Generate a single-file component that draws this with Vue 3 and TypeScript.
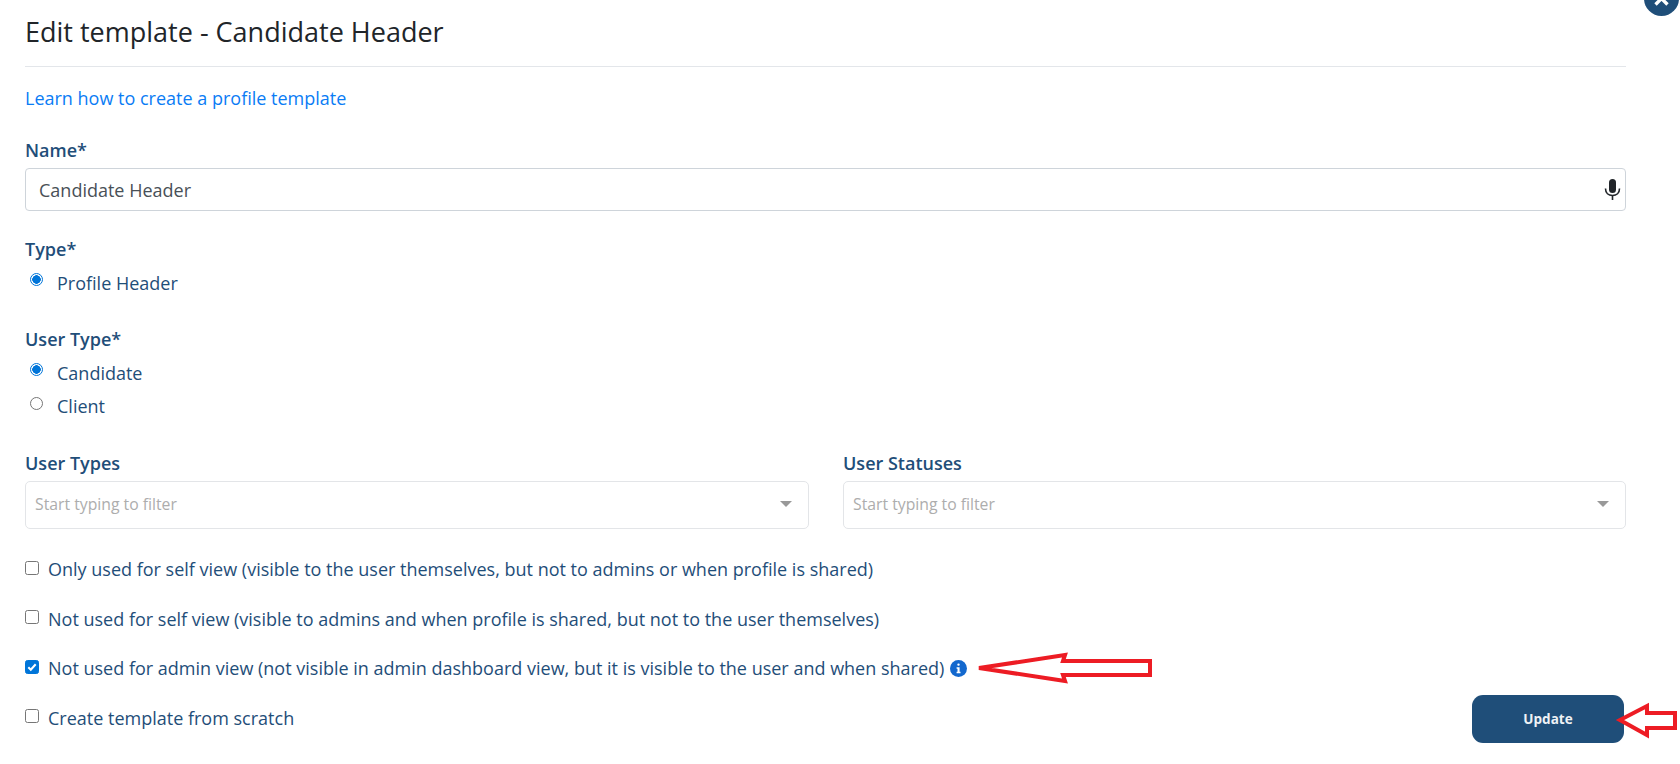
<script setup lang="ts">
const checks = [
  { text: 'Only used for self view (visible to the user themselves, but not to admins or when profile is shared)', on: false },
  { text: 'Not used for self view (visible to admins and when profile is shared, but not to the user themselves)', on: false },
]
</script>

<template>
  <div class="page">
    <button class="close" aria-label="Close">
      <svg width="35" height="35" viewBox="0 0 35 35"><circle cx="17.5" cy="17.5" r="17.5" fill="#1f4e79" /><path d="M11.5 11.5 L23.5 23.5 M23.5 11.5 L11.5 23.5" stroke="#fff" stroke-width="3.4" fill="none" /></svg>
    </button>
    <header class="head"><h1>Edit template - Candidate Header</h1></header>
    <a class="learn" href="#">Learn how to create a profile template</a>

    <label class="lab name-lab">Name*</label>
    <div class="input">
      <span>Candidate Header</span>
      <svg class="mic" width="17" height="24" viewBox="0 0 17 24">
        <rect x="5" y="1" width="7" height="14" rx="3.5" fill="#212529" />
        <path d="M1.5 10.5 C1.5 15 4.5 17.5 8.5 17.5 C12.5 17.5 15.500 15 15.500 10.500" stroke="#212529" stroke-width="1.600" fill="none" />
        <rect x="7.700" y="17" width="1.600" height="5" fill="#212529" />
      </svg>
    </div>

    <label class="lab type-lab">Type*</label>
    <div class="opt first"><span class="radio on"></span>Profile Header</div>

    <label class="lab usertype-lab">User Type*</label>
    <div class="opt first"><span class="radio on"></span>Candidate</div>
    <div class="opt second"><span class="radio"></span>Client</div>

    <div class="cols">
      <div class="col">
        <label class="lab">User Types</label>
        <div class="select"><span>Start typing to filter</span><i class="caret"></i></div>
      </div>
      <div class="col">
        <label class="lab">User Statuses</label>
        <div class="select"><span>Start typing to filter</span><i class="caret"></i></div>
      </div>
    </div>

    <div class="checks">
      <div v-for="c in checks" :key="c.text" class="check"><span class="box"></span>{{ c.text }}</div>
      <div class="check">
        <span class="box on">
          <svg width="14" height="14" viewBox="0 0 13 13"><path d="M2.500 6.800 L5.200 9.500 L10.500 3.500" stroke="#fff" stroke-width="2.200" fill="none" /></svg>
        </span>Not used for admin view (not visible in admin dashboard view, but it is visible to the user and when shared)<svg class="info" width="17" height="17" viewBox="0 0 17 17">
          <circle cx="8.500" cy="8.500" r="8.500" fill="#1368ce" />
          <rect x="7.300" y="3.400" width="2.400" height="2.400" rx="1.100" fill="#fff" />
          <path d="M6.600 7.200 H9.600 V11.800 H10.500 V13.300 H6.600 V11.800 H7.500 V8.700 H6.600 Z" fill="#fff" />
        </svg>
        <svg class="arrow arrow-a" width="176" height="32" viewBox="0 0 176 32">
          <path d="M3 16 L89 3 L87 9 L174 9 L174 23 L87 23 L89 29 Z" fill="#fff" stroke="#ed1c24" stroke-width="4" />
        </svg>
      </div>
      <div class="check last">
        <span class="box"></span>Create template from scratch
        <button class="update">Update</button>
        <svg class="arrow arrow-b" width="60" height="36" viewBox="0 0 60 36">
          <path d="M2 17 L29 3 L29 10 L57 10 L57 25 L29 25 L29 32 Z" fill="#fff" stroke="#ed1c24" stroke-width="4" />
        </svg>
      </div>
    </div>
  </div>
</template>

<style>
html, body { margin: 0; background: #fff; overflow: hidden; }
</style>

<style scoped>
.page {
  position: relative;
  box-sizing: border-box;
  width: 1680px;
  height: 764px;
  padding: 0 54px 0 25px;
  overflow: hidden;
  font-family: "Open Sans", sans-serif;
  font-size: 18px;
  color: #1f4e79;
}
.close {
  position: absolute;
  left: 1644px;
  top: -19px;
  padding: 0;
  border: 0;
  background: none;
  line-height: 0;
}
.head { height: 66px; border-bottom: 1px solid #e3e6ea; }
h1 {
  margin: 0;
  padding-top: 14px;
  font-size: 27px;
  line-height: 36px;
  font-weight: 400;
  color: #212529;
}
.learn {
  display: block;
  margin-top: 19px;
  font-size: 18px;
  line-height: 24px;
  color: #0a7cf5;
  text-decoration: none;
}
.lab {
  display: block;
  font-size: 18px;
  line-height: 24px;
  font-weight: 600;
  color: #1f4e79;
}
.name-lab { margin-top: 28px; }
.input {
  box-sizing: border-box;
  display: flex;
  align-items: center;
  justify-content: space-between;
  height: 43px;
  margin-top: 6px;
  padding: 0 4px 0 13px;
  border: 1px solid #ced4da;
  border-radius: 4px;
  font-size: 18px;
  color: #495057;
}
.type-lab { margin-top: 26px; }
.usertype-lab { margin-top: 32px; }
.opt {
  display: flex;
  align-items: center;
  height: 24px;
  padding-left: 5px;
  font-size: 18px;
  color: #1f4e79;
}
.first { margin-top: 10px; }
.second { margin-top: 9px; }
.radio {
  box-sizing: border-box;
  flex: none;
  width: 13px;
  height: 13px;
  margin: -6px 14px 0 0;
  border: 1px solid #767676;
  border-radius: 50%;
}
.radio.on {
  margin-top: -8px;
  border-color: #0075d9;
  background: radial-gradient(circle, #0075d9 0 4px, #fff 4.500px);
}
.cols {
  display: grid;
  grid-template-columns: 784px 783px;
  justify-content: space-between;
  margin-top: 33px;
}
.select {
  box-sizing: border-box;
  display: flex;
  align-items: center;
  justify-content: space-between;
  height: 48px;
  margin-top: 6px;
  padding: 0 16px 2px 9px;
  border: 1px solid #e3e5e8;
  border-radius: 5px;
  font-size: 15.750px;
  color: #adadad;
}
.caret {
  width: 0;
  height: 0;
  border-left: 6px solid transparent;
  border-right: 6px solid transparent;
  border-top: 6px solid #999;
}
.checks { display: flex; flex-direction: column; gap: 25.600px; margin-top: 28px; }
.check {
  position: relative;
  display: flex;
  align-items: center;
  height: 24px;
  font-size: 18px;
  color: #1f4e79;
  white-space: nowrap;
}
.box {
  box-sizing: border-box;
  flex: none;
  display: flex;
  align-items: center;
  justify-content: center;
  width: 14px;
  height: 14px;
  margin: -3px 9px 0 0;
  border: 1px solid #767676;
  border-radius: 2.500px;
}
.box.on { border-color: #0075d9; background: #0075d9; }
.info { flex: none; margin-left: 6px; }
.arrow { position: absolute; overflow: visible; }
.arrow-a { left: 951px; top: -4px; }
.arrow-b { left: 1593px; top: -3px; }
.update {
  position: absolute;
  right: 2px;
  top: -11px;
  width: 152px;
  height: 48px;
  border: 0;
  border-radius: 11px;
  background: #1f4e79;
  color: #eef2f6;
  font-family: "Open Sans", sans-serif;
  font-size: 13.500px;
  font-weight: 700;
}
</style>
